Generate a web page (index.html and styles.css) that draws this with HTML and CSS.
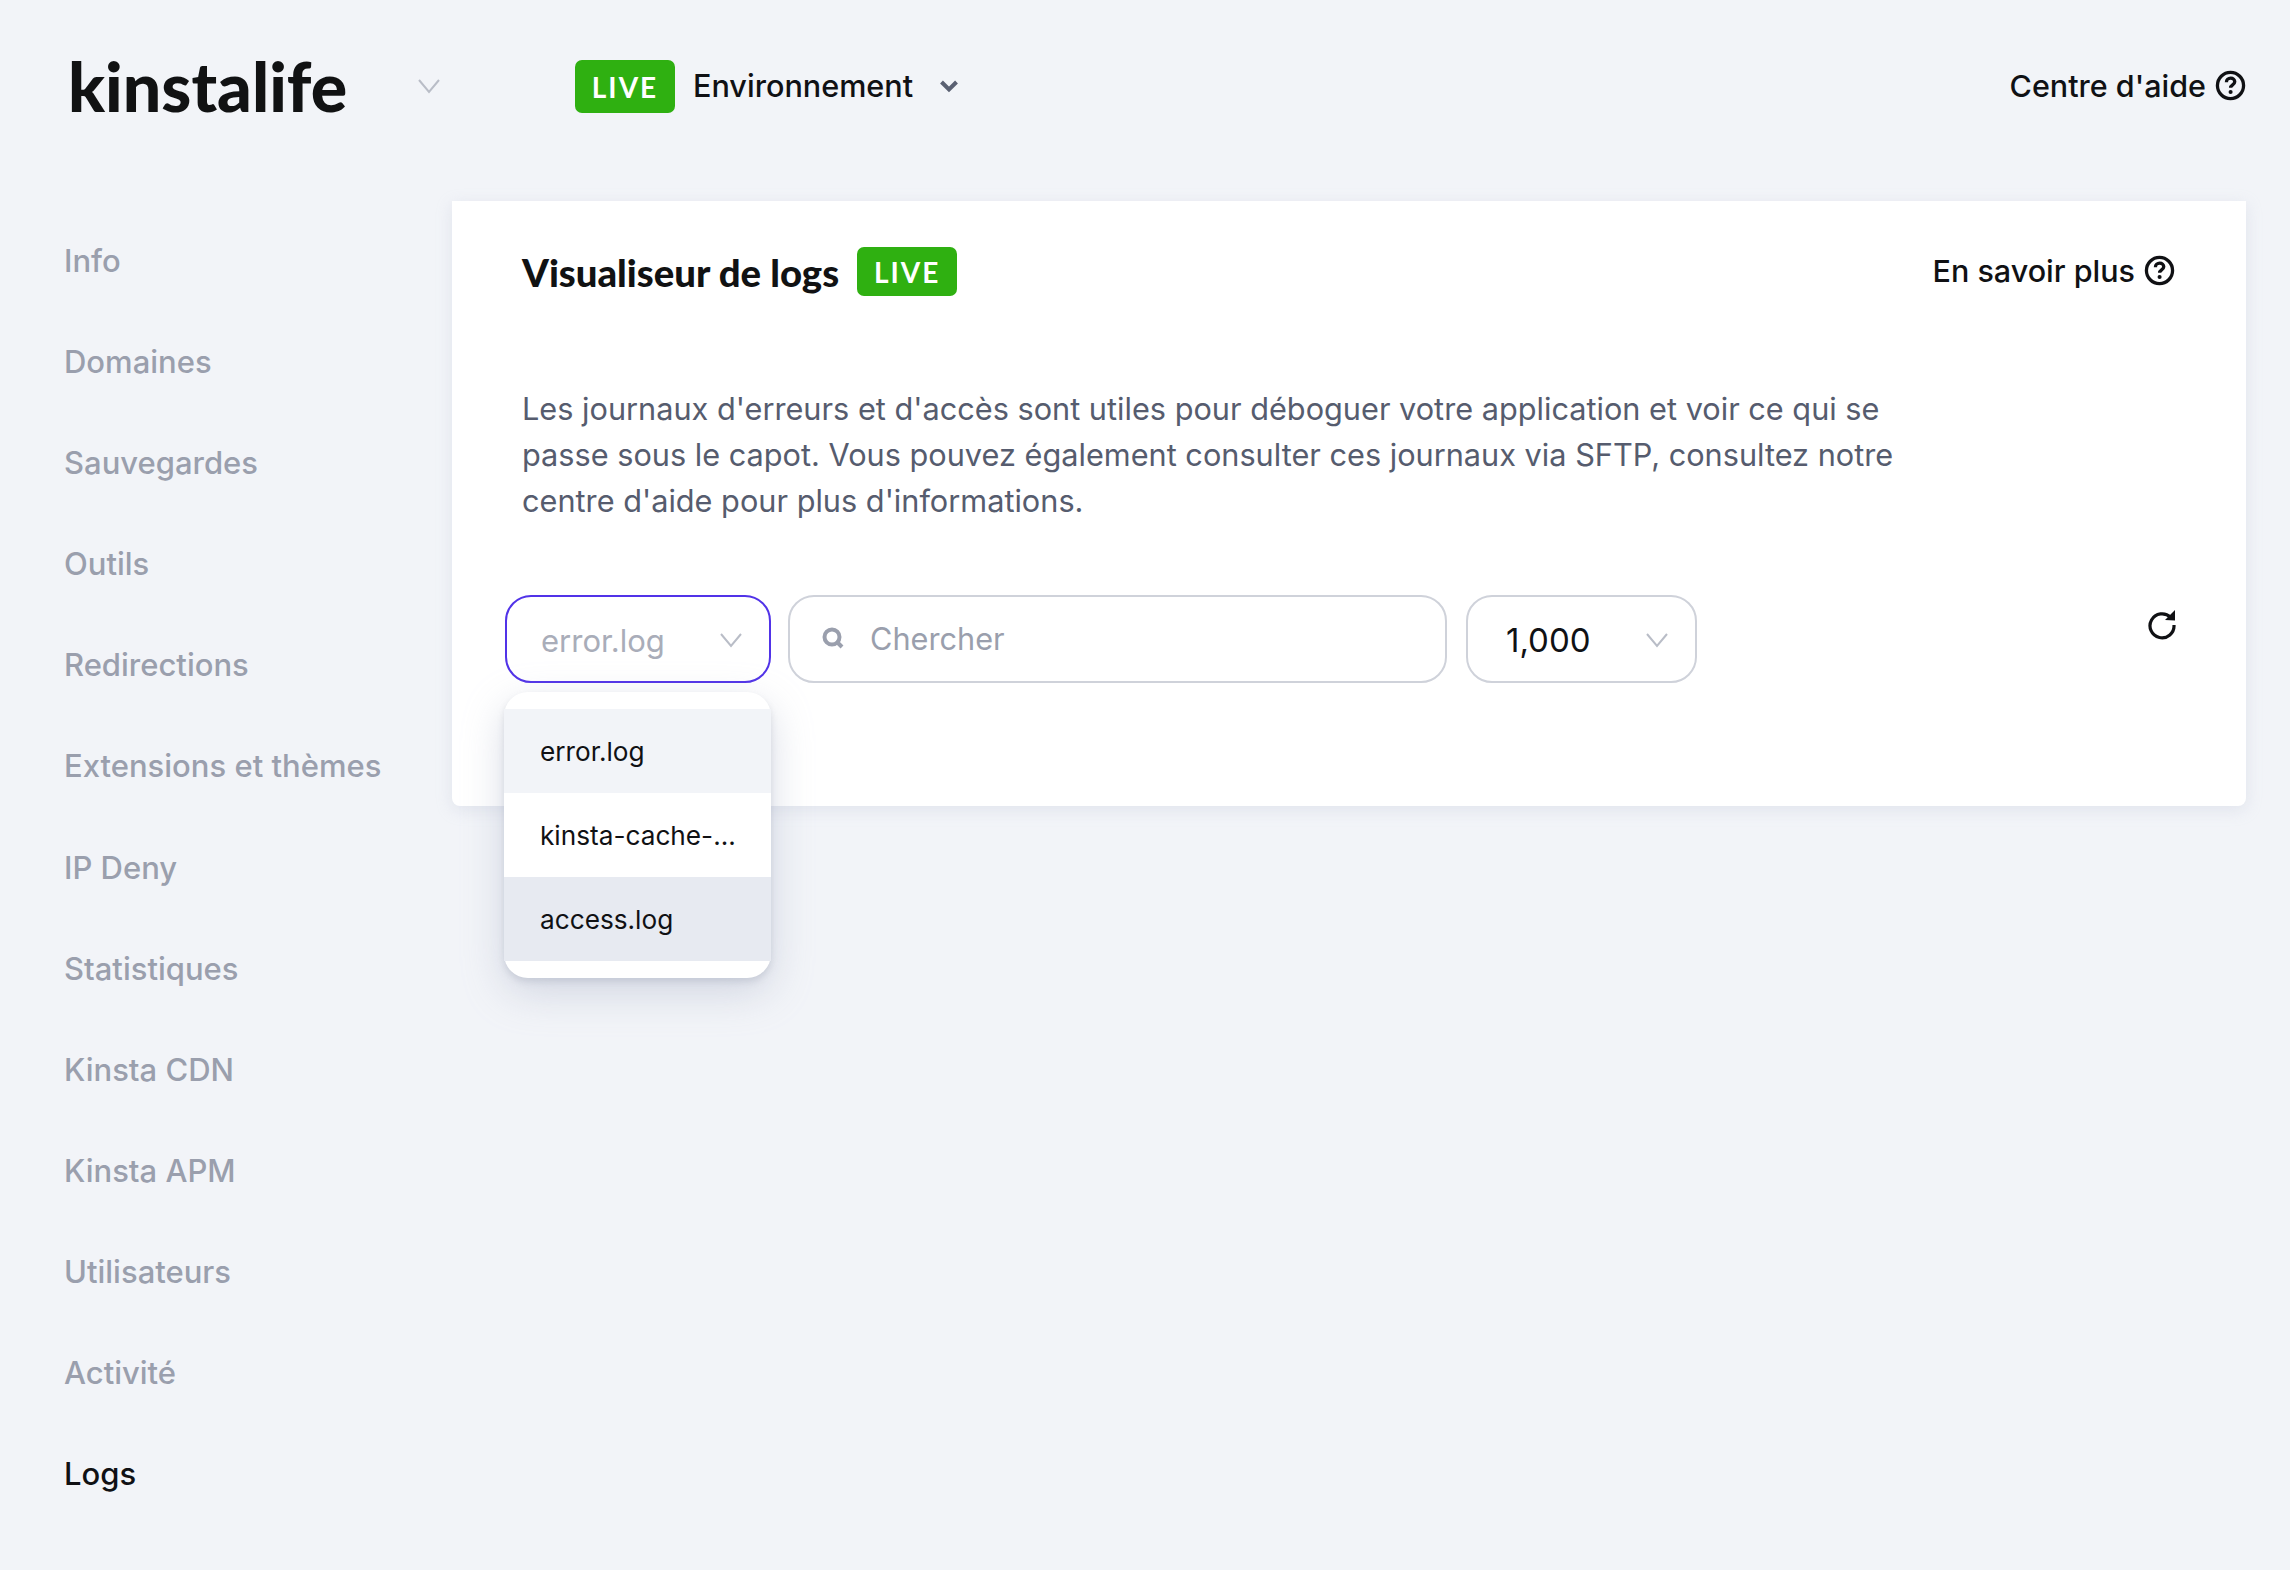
FILE: index.html
```html
<!DOCTYPE html>
<html lang="fr">
<head>
<meta charset="utf-8">
<title>Visualiseur de logs</title>
<link rel="stylesheet" href="styles.css">
</head>
<body>
  <header class="topbar">
    <div class="logo">kinstalife</div>
    <svg class="caret caret-logo" viewBox="0 0 24 16"><path d="M2 2l10 12L22 2"/></svg>
    <span class="badge badge-top">LIVE</span>
    <span class="env">Environnement</span>
    <svg class="caret-bold" viewBox="0 0 20 14"><path d="M2.5 3l7.5 7.5L17.5 3"/></svg>
    <a class="help help-top">Centre d'aide
      <svg class="help-icon" viewBox="0 0 32 32"><circle cx="16" cy="16" r="13.5"/><path d="M11.8 12.6c0-2.6 2-4.2 4.4-4.2s4.2 1.5 4.2 3.8c0 3.2-4.3 3.2-4.3 6.2"/><circle class="dot" cx="16.1" cy="22.8" r="2.1"/></svg>
    </a>
  </header>

  <div class="layout">
    <nav class="sidebar">
      <a>Info</a>
      <a>Domaines</a>
      <a>Sauvegardes</a>
      <a>Outils</a>
      <a>Redirections</a>
      <a>Extensions et thèmes</a>
      <a>IP Deny</a>
      <a>Statistiques</a>
      <a>Kinsta CDN</a>
      <a>Kinsta APM</a>
      <a>Utilisateurs</a>
      <a>Activité</a>
      <a class="active">Logs</a>
    </nav>

    <main class="card">
      <div class="card-head">
        <h1>Visualiseur de logs</h1>
        <span class="badge badge-title">LIVE</span>
        <a class="help help-card">En savoir plus
          <svg class="help-icon" viewBox="0 0 32 32"><circle cx="16" cy="16" r="13.5"/><path d="M11.8 12.6c0-2.6 2-4.2 4.4-4.2s4.2 1.5 4.2 3.8c0 3.2-4.3 3.2-4.3 6.2"/><circle class="dot" cx="16.1" cy="22.8" r="2.1"/></svg>
        </a>
      </div>

      <p class="intro">Les journaux d'erreurs et d'accès sont utiles pour déboguer votre application et voir ce qui se passe sous le capot. Vous pouvez également consulter ces journaux via SFTP, consultez notre centre d'aide pour plus d'informations.</p>

      <div class="toolbar">
        <div class="select select-file">
          <span>error.log</span>
          <svg class="caret" viewBox="0 0 24 16"><path d="M2 2l10 12L22 2"/></svg>
          <ul class="dropdown">
            <li class="current">error.log</li>
            <li>kinsta-cache-...</li>
            <li class="hover">access.log</li>
          </ul>
        </div>
        <div class="search">
          <svg class="search-icon" viewBox="0 0 24 24"><circle cx="11" cy="11" r="7.5"/><path d="M16 16l5 5"/></svg>
          <span>Chercher</span>
        </div>
        <div class="select select-count">
          <span>1,000</span>
          <svg class="caret" viewBox="0 0 24 16"><path d="M2 2l10 12L22 2"/></svg>
        </div>
        <svg class="refresh" viewBox="0 0 32 32"><path d="M24.6 9.4A12 12 0 1 0 28 17"/><path class="fill" d="M19 12L29 2v10.5z"/></svg>
      </div>
    </main>
  </div>
</body>
</html>
```

FILE: styles.css
```css
* { box-sizing: border-box; }
html, body { margin: 0; padding: 0; }
body { width: 2290px; height: 1570px; overflow: hidden; background: #f2f4f8; font-family: Inter, "Liberation Sans", sans-serif; color: #101114; }
a { color: inherit; text-decoration: none; }

.topbar { display: flex; align-items: center; height: 201px; padding: 0 44px 30px 68px; }
.logo { width: 349px; font-family: Lato, sans-serif; font-weight: 900; font-size: 68px; line-height: 1; color: #111213; }
.caret { display: block; width: 24px; height: 16px; fill: none; stroke: #b9bdc7; stroke-width: 2; }
.caret-logo { margin-right: 134px; }
.caret-bold { display: block; width: 20px; height: 14px; margin-left: 26px; fill: none; stroke: #5a6072; stroke-width: 4; }

.badge { display: flex; align-items: center; justify-content: center; width: 100px; background: #2fb011; color: #fff; border-radius: 7px; font-family: Lato, sans-serif; font-weight: 700; font-size: 28px; letter-spacing: 2px; }
.badge-top { height: 53px; margin-top: 2px; }
.badge-title { height: 49px; margin-left: 18px; }
.env { margin-left: 18px; font-size: 30.6px; font-weight: 500; }

.help { display: flex; align-items: center; gap: 9px; margin-left: auto; font-size: 30.5px; font-weight: 500; white-space: nowrap; }
.help-card { margin-top: -2px; }
.help-icon { display: block; width: 31px; height: 31px; fill: none; stroke: #101114; stroke-width: 3.4; }
.help-icon .dot { fill: #101114; stroke: none; }

.layout { display: flex; align-items: flex-start; padding-right: 44px; }
.sidebar { display: flex; flex-direction: column; width: 452px; padding: 9px 0 0 64px; }
.sidebar a { height: 101.1px; line-height: 101px; font-size: 31px; font-weight: 500; color: #9a9fad; white-space: nowrap; }
.sidebar a.active { color: #101114; }

.card { flex: 1; height: 605px; padding: 46px 71px 0 70px; background: #fff; border-radius: 0 0 8px 8px; box-shadow: 0 4px 16px rgba(180, 188, 208, .28); }
.card-head { display: flex; align-items: center; height: 49px; }
.card-head h1 { margin: 0; font-family: Lato, sans-serif; font-weight: 900; font-size: 38.3px; color: #111213; white-space: nowrap; }

.intro { width: 1400px; margin: 90px 0 0; font-size: 30.7px; line-height: 46px; color: #565c6e; }

.toolbar { display: flex; align-items: flex-start; gap: 19px; margin: 71px 0 0 -17px; }
.select { position: relative; display: flex; align-items: center; justify-content: space-between; height: 88px; border: 2px solid #cfd2da; border-radius: 26px; font-size: 31px; background: #fff; }
.select-file { width: 266px; margin-right: -2px; padding: 2px 26px 0 34px; border-color: #5133e8; color: #a9adb9; }
.select-count { width: 231px; padding: 2px 26px 0 38px; font-size: 33px; }
.search { display: flex; align-items: center; width: 659px; height: 88px; padding: 0 0 2px 31px; border: 2px solid #cfd2da; border-radius: 26px; font-size: 30.7px; color: #9a9fad; }
.search-icon { display: block; width: 24px; height: 24px; margin-right: 25px; fill: none; stroke: #9a9fad; stroke-width: 4; }
.refresh { display: block; width: 32px; height: 32px; margin: 13px -3px 0 auto; fill: none; stroke: #101114; stroke-width: 3.2; }
.refresh .fill { fill: #101114; stroke: none; }

/* menu sits over the card edge */
.dropdown { position: absolute; left: -3px; top: 95px; width: 267px; height: 286px; margin: 0; padding: 17px 0 18px; list-style: none; background: #fff; border-radius: 24px; box-shadow: 0 14px 40px rgba(170, 178, 200, .45), 0 4px 6px rgba(150, 155, 170, .3); color: #101114; font-size: 26.2px; }
.dropdown li { display: flex; align-items: center; height: 84px; padding-left: 36px; }
.dropdown li.current { background: #f2f4f8; }
.dropdown li.hover { background: #e7eaf1; }
```
